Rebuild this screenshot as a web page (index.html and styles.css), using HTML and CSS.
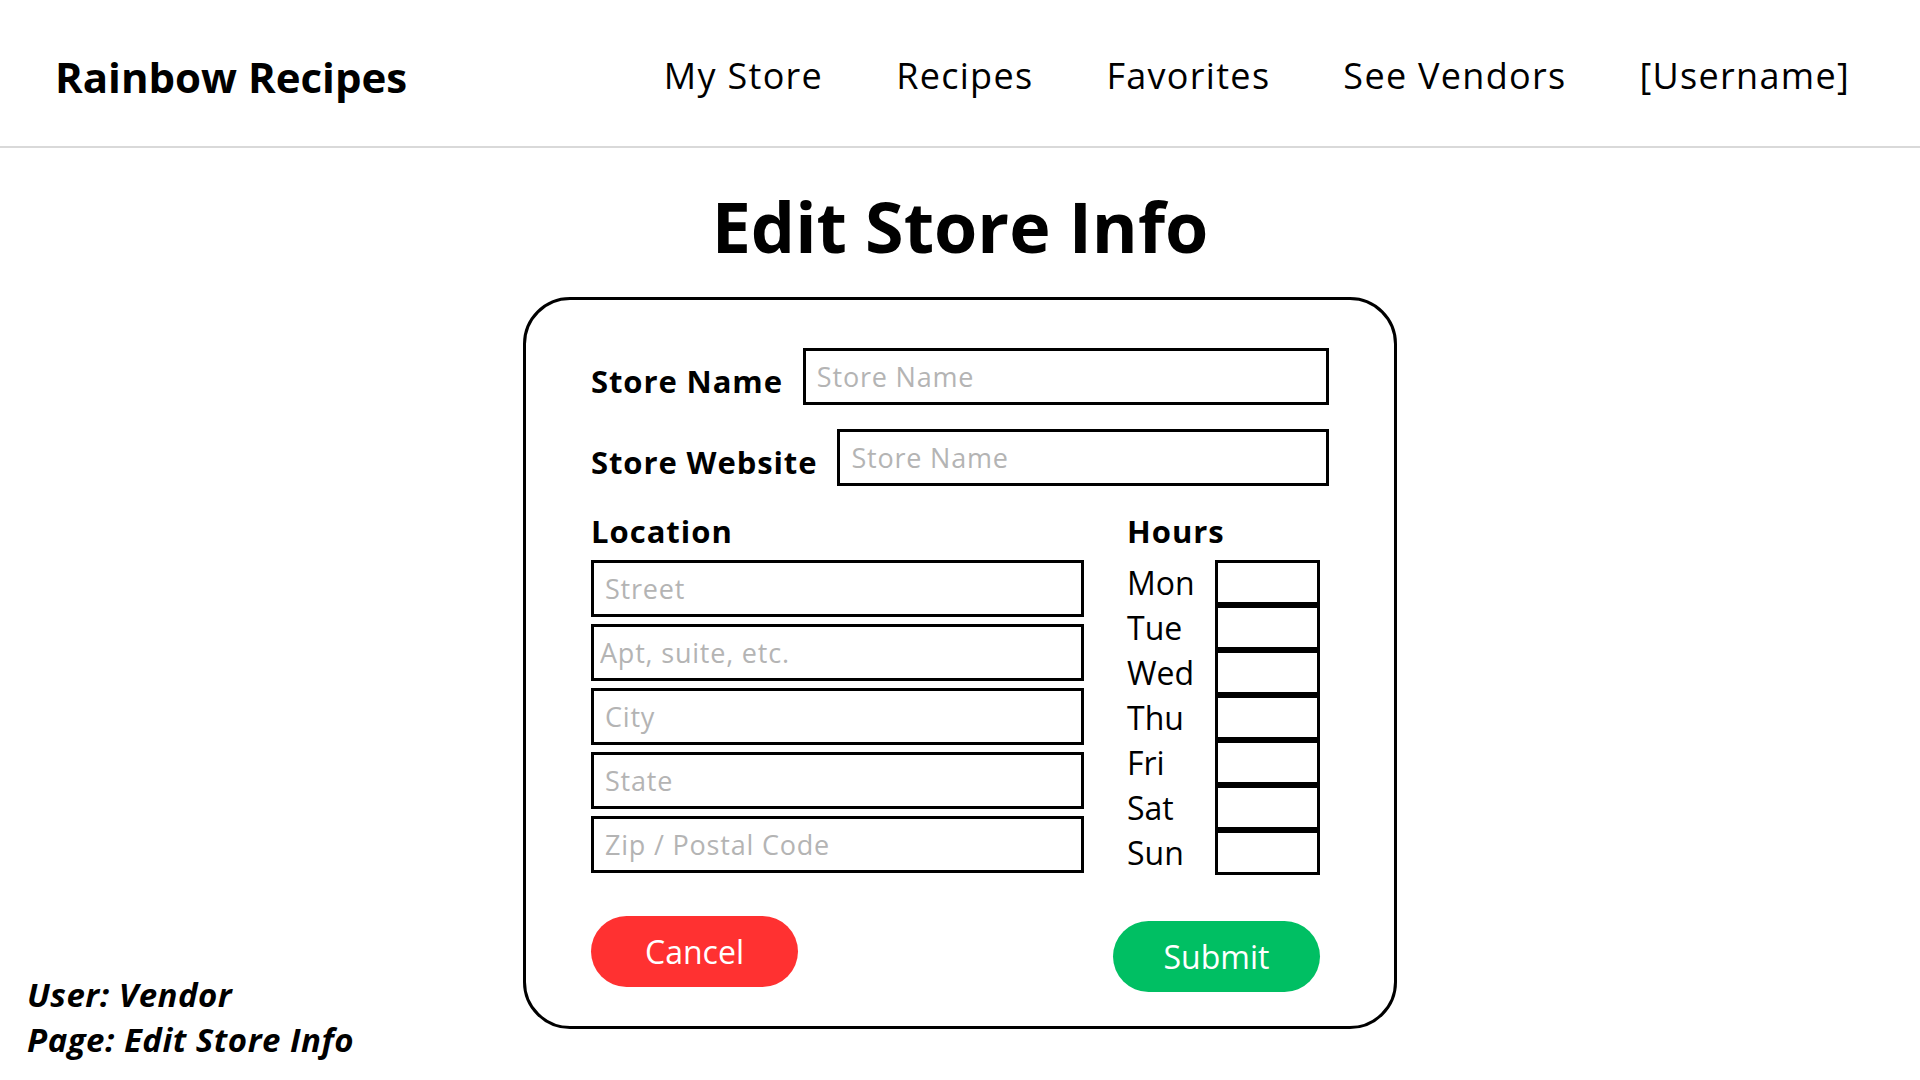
FILE: index.html
```html
<!DOCTYPE html>
<html>
<head>
  <meta charset="utf-8">
  <meta name="viewport" content="width=device-width, initial-scale=1">
  <title>Edit Store Info - Rainbow Recipes</title>
  <link rel="stylesheet" href="styles.css">
</head>
<body>
  <header class="topbar">
    <div class="brand">Rainbow Recipes</div>
    <nav class="nav">
      <a href="#">My Store</a>
      <a href="#">Recipes</a>
      <a href="#">Favorites</a>
      <a href="#">See Vendors</a>
      <a href="#">[Username]</a>
    </nav>
  </header>
  <main class="page">
    <h1 class="title">Edit Store Info</h1>
    <form class="card" id="storeinfo" action="#">
      <div class="row">
        <label for="name">Store Name</label>
        <input type="text" id="name" name="name" placeholder="Store Name">
      </div>
      <div class="row">
        <label for="website">Store Website</label>
        <input type="text" id="website" name="website" placeholder="Store Name">
      </div>
      <div class="details">
        <div class="location">
          <div class="heading">Location</div>
          <div class="fields">
            <input type="text" name="street" placeholder="Street">
            <input type="text" class="tight" name="apt" placeholder="Apt, suite, etc.">
            <input type="text" name="city" placeholder="City">
            <input type="text" name="state" placeholder="State">
            <input type="text" name="zip" placeholder="Zip / Postal Code">
          </div>
        </div>
        <div class="hours">
          <div class="heading">Hours</div>
          <div class="days">
            <span>Mon</span><input type="text" name="mon">
            <span>Tue</span><input type="text" name="tue">
            <span>Wed</span><input type="text" name="wed">
            <span>Thu</span><input type="text" name="thu">
            <span>Fri</span><input type="text" name="fri">
            <span>Sat</span><input type="text" name="sat">
            <span>Sun</span><input type="text" name="sun">
          </div>
        </div>
      </div>
      <div class="actions">
        <button type="button" id="cancel">Cancel</button>
        <button type="submit" id="submit">Submit</button>
      </div>
    </form>
    <p class="note">User: Vendor<br>Page: Edit Store Info</p>
  </main>
</body>
</html>
```

FILE: styles.css
```css
body {
  margin: 0;
  font-family: "Open Sans", "Noto Sans", sans-serif;
  color: #000;
  background: #fff;
}
.topbar {
  display: flex;
  align-items: center;
  justify-content: space-between;
  height: 148px;
  padding: 4px 70px 0 55px;
  box-sizing: border-box;
  border-bottom: 2px solid #d9d9d9;
}
.brand {
  font-size: 42px;
  font-weight: 700;
  margin-top: 2px;
}
.nav {
  display: flex;
  gap: 73px;
}
.nav a {
  font-size: 36px;
  letter-spacing: 1.3px;
  color: #000;
  text-decoration: none;
}
.page {
  display: grid;
  grid-template-columns: 1fr 874px 1fr;
}
.title {
  grid-column: 2;
  margin: 30px 0 23px;
  font-size: 70px;
  font-weight: 700;
  line-height: normal;
  text-align: center;
}
.card {
  grid-column: 2;
  grid-row: 2;
  box-sizing: border-box;
  width: 874px;
  margin-bottom: 33px;
  padding: 48px 65px 34px;
  border: 3px solid #000;
  border-radius: 47px;
}
input {
  box-sizing: border-box;
  height: 57px;
  padding: 0 11px;
  border: 3px solid #000;
  border-radius: 0;
  font-family: inherit;
  font-size: 27px;
  letter-spacing: 0.8px;
  outline: none;
}
input::placeholder {
  color: #b4b4b4;
}
.row {
  display: flex;
  align-items: center;
  gap: 20px;
  margin-bottom: 24px;
}
.row label {
  padding-top: 8px;
  font-size: 31px;
  font-weight: 700;
  letter-spacing: 0.9px;
}
.row input {
  flex: 1;
  min-width: 0;
}
.heading {
  font-size: 31px;
  font-weight: 700;
  letter-spacing: 1px;
  margin-bottom: 8px;
}
.details {
  display: flex;
  gap: 43px;
}
.location {
  width: 493px;
}
.fields {
  display: flex;
  flex-direction: column;
  gap: 7px;
}
.fields input {
  width: 100%;
}
.fields .tight {
  padding-left: 6px;
}
.days {
  display: grid;
  grid-template-columns: 88px 105px;
  grid-auto-rows: 45px;
  align-items: center;
}
.days span {
  font-size: 32px;
}
.days input {
  width: 105px;
  height: 45px;
}
.actions {
  display: flex;
  justify-content: space-between;
  align-items: flex-start;
  margin: 41px 9px 0 0;
}
.actions button {
  width: 207px;
  height: 71px;
  border: none;
  border-radius: 36px;
  color: #fff;
  font-family: inherit;
  font-size: 32px;
  cursor: pointer;
}
#cancel {
  background-color: #ff3131;
}
#submit {
  margin-top: 5px;
  background-color: #00bf63;
}
.note {
  grid-column: 1;
  grid-row: 2;
  align-self: end;
  margin: 0 0 0 27px;
  font-size: 33px;
  font-weight: 700;
  font-style: italic;
  letter-spacing: 0.5px;
  line-height: 45px;
}
```
